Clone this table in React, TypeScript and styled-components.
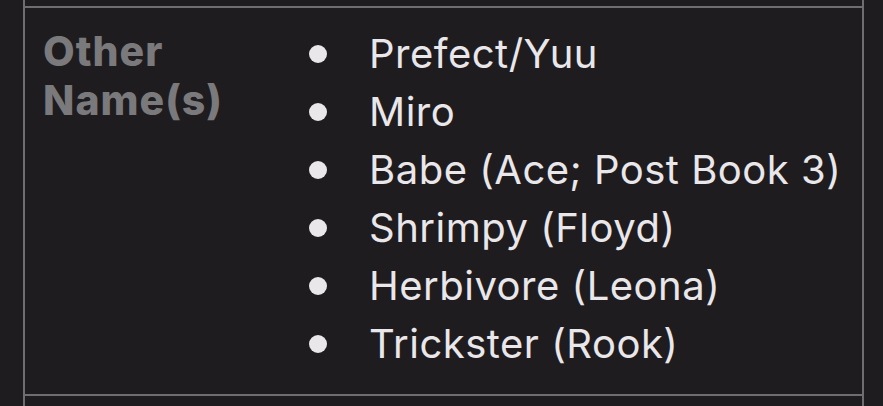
import React from "react";
import styled, { createGlobalStyle } from "styled-components";

const Global = createGlobalStyle`
  html, body { margin: 0; padding: 0; background: #1f1c20; }
  body { width: 883px; height: 406px; overflow: hidden; font-family: Inter, "Noto Sans", sans-serif; }
`;

const Table = styled.div`
  margin-left: 23px;
  width: 841px;
  height: 406px;
  box-sizing: border-box;
  border-left: 2px solid #6f6d70;
  border-right: 2px solid #6f6d70;
  display: flex;
  flex-direction: column;
`;

const Stub = styled.div<{ $h: number }>`
  height: ${(p) => p.$h}px;
  flex: none;
`;

const Row = styled.div`
  display: grid;
  grid-template-columns: 262px 1fr;
  border-top: 2px solid #6f6d70;
  border-bottom: 2px solid #6f6d70;
  height: 390px;
  box-sizing: border-box;
  flex: none;
`;

const Label = styled.div`
  padding: 19px 0 0 18px;
  color: #7a797b;
  font-weight: 800;
  font-size: 41px;
  letter-spacing: 1px;
  line-height: 49px;
`;

const List = styled.ul`
  list-style: none;
  margin: 0;
  padding: 17px 0 0 0;
`;

const Item = styled.li`
  display: flex;
  align-items: center;
  color: #e9e7ea;
  font-size: 40px;
  letter-spacing: 0.5px;
  line-height: 58px;
  white-space: nowrap;
`;

const Bullet = styled.span`
  width: 18px;
  height: 18px;
  border-radius: 50%;
  background: #e9e7ea;
  margin: 0 42px 0 22px;
  flex: none;
`;

const names = [
  "Prefect/Yuu",
  "Miro",
  "Babe (Ace; Post Book 3)",
  "Shrimpy (Floyd)",
  "Herbivore (Leona)",
  "Trickster (Rook)",
];

export default function App() {
  return (
    <>
      <Global />
      <Table>
        <Stub $h={6} />
        <Row>
          <Label>
            Other
            <br />
            Name(s)
          </Label>
          <List>
            {names.map((n) => (
              <Item key={n}>
                <Bullet />
                {n}
              </Item>
            ))}
          </List>
        </Row>
      </Table>
    </>
  );
}
